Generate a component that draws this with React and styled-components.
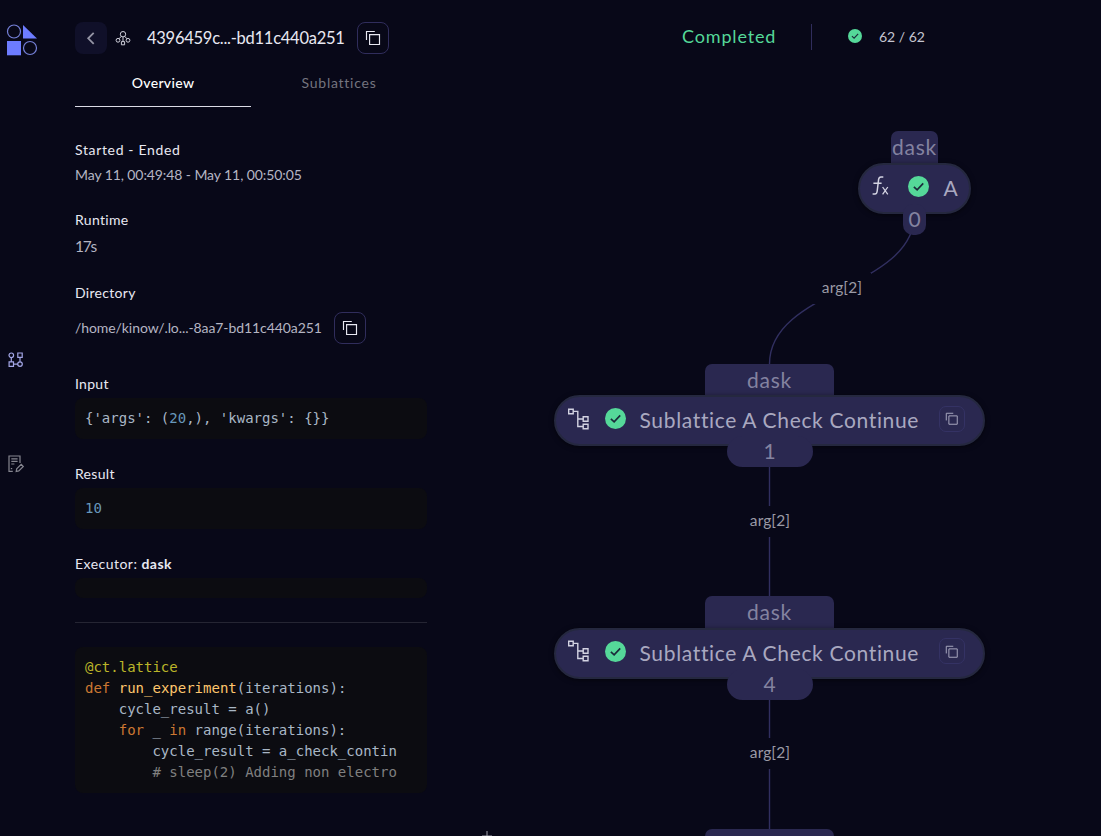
import React from "react";
import styled, { createGlobalStyle } from "styled-components";

const colors = {
  background: "#080818",
  node: "#2a2850",
  nodeBorder: "#25283f",
  edge: "#312f60",
  outline: "#302d5c",
  code: "#0c0c11",
  primary: "#e8e8f2",
  secondary: "#b5b5c3",
  muted: "#74747f",
  brand: "#6d7cff",
  success: "#55d899",
};

const nodes = [
  { id: 1, name: "Sublattice A Check Continue", count: 1, top: 363.7 },
  { id: 4, name: "Sublattice A Check Continue", count: 4, top: 596.2 },
];

const edgeLabels = [
  { left: 813, top: 273 },
  { left: 741, top: 506 },
  { left: 741, top: 738 },
];

function App() {
  return (
    <Page>
      <GlobalStyle />
      <Sidebar>
        <Logo />
        <LatticeIcon />
        <LogsIcon />
      </Sidebar>
      <Panel>
        <Header>
          <BackButton>
            <svg width="32" height="32" fill="none" stroke="#9595a5" strokeWidth="1.8">
              <path d="M18.7 10.8L13.2 16.3L18.7 21.8" />
            </svg>
          </BackButton>
          <TreeIcon />
          <Title>4396459c...-bd11c440a251</Title>
          <CopyButton>
            <CopyIcon />
          </CopyButton>
        </Header>
        <Tabs>
          <Tab $active>Overview</Tab>
          <Tab>Sublattices</Tab>
        </Tabs>
        <Field $gap={5} $after={25}>
          <Label $track={0.65}>Started - Ended</Label>
          <Value $track={-0.09}>May 11, 00:49:48 - May 11, 00:50:05</Value>
        </Field>
        <Field $gap={6} $after={27}>
          <Label>Runtime</Label>
          <Value $size={15.5} $track={-1.3}>
            17s
          </Value>
        </Field>
        <Field $gap={9} $after={30}>
          <Label>Directory</Label>
          <Directory>
            <Value $track={-0.08}>/home/kinow/.lo...-8aa7-bd11c440a251</Value>
            <CopyButton>
              <CopyIcon />
            </CopyButton>
          </Directory>
        </Field>
        <Field $gap={4} $after={25}>
          <Label>Input</Label>
          <Code>
            {"{'args': ("}
            <Num>20</Num>
            {",), 'kwargs': {}}"}
          </Code>
        </Field>
        <Field $gap={4} $after={25}>
          <Label>Result</Label>
          <Code>
            <Num>10</Num>
          </Code>
        </Field>
        <Field $gap={4} $after={24}>
          <Label $track={0.47}>
            Executor: <b>dask</b>
          </Label>
          <Code />
        </Field>
        <Divider />
        <Code>
          <Line>
            <Meta>@ct.lattice</Meta>
          </Line>
          <Line>
            <Keyword>def</Keyword> <Fn>run_experiment</Fn>(iterations):
          </Line>
          <Line $indent={4}>cycle_result = a()</Line>
          <Line $indent={4}>
            <Keyword>for</Keyword> _ <Keyword>in</Keyword> range(iterations):
          </Line>
          <Line $indent={8}>cycle_result = a_check_contin</Line>
          <Line $indent={8}>
            <Comment># sleep(2) Adding non electro</Comment>
          </Line>
        </Code>
      </Panel>
      <Main>
        <Status>
          <Completed>Completed</Completed>
          <Separator />
          <CheckIcon size={14} />
          <Counter>62 / 62</Counter>
        </Status>
      </Main>
      <Graph>
        <Edges width="1101" height="836">
          <path d="M914.5 214C914.5 289 769.5 289 769.5 364" />
          <path d="M769.5 446V597M769.5 679V829" />
        </Edges>
        {edgeLabels.map((label) => (
          <EdgeLabel key={label.top} $left={label.left} $top={label.top}>
            arg[2]
          </EdgeLabel>
        ))}
        <Node $left={858} $top={131.1} $width={113}>
          <Executor $width={47}>dask</Executor>
          <NodeBody $gap={16}>
            <FunctionIcon />
            <CheckIcon size={21} />
            <NodeName>A</NodeName>
          </NodeBody>
          <NodeCount $width={23} $small>
            0
          </NodeCount>
        </Node>
        {nodes.map((node) => (
          <Node key={node.id} $left={554} $top={node.top} $width={431}>
            <Executor $width={129}>dask</Executor>
            <NodeBody $gap={15}>
              <SublatticeIcon />
              <CheckIcon size={21} />
              <NodeName>{node.name}</NodeName>
              <NodeCopy>
                <CopyIcon size={13.5} />
              </NodeCopy>
            </NodeBody>
            <NodeCount $width={86}>{node.count}</NodeCount>
          </Node>
        ))}
        <Node $left={554} $top={829} $width={431}>
          <Executor $width={129} />
        </Node>
        <ZoomIn width="10" height="10" viewBox="0 0 10 10">
          <path d="M5 0V10M0 5H10" />
        </ZoomIn>
      </Graph>
    </Page>
  );
}

export default App;

function Logo() {
  return (
    <svg width="32" height="32" viewBox="0 0 32 32" fill={colors.brand}>
      <circle cx="8" cy="7.5" r="6.5" fill="none" stroke="#7580d8" strokeWidth="1.2" />
      <path d="M17 1L31 14.5H17Z" />
      <path d="M1 17H15V31.3H1Z" />
      <circle cx="24" cy="24" r="6.5" fill="none" stroke="#7580d8" strokeWidth="1.2" />
    </svg>
  );
}

function LatticeIcon() {
  return (
    <NavIcon $top={296} width="16" height="16" stroke="#a3a6e6">
      <circle cx="3.3" cy="3.3" r="2.3" />
      <path d="M9.8 1H14.2V5.4H9.8ZM1.1 9.9H5.5V14.3H1.1Z" />
      <circle cx="12" cy="12.1" r="2.3" />
      <path d="M3.3 5.6V9.9M12 5.4V9.8M5.5 12.1H9.7" />
    </NavIcon>
  );
}

function LogsIcon() {
  return (
    <NavIcon $top={87} width="17" height="18" stroke="#85858f">
      <path d="M4.8 16.3H1V1H12V8" />
      <path d="M3.3 3.8H9.6M3.3 6.4H9.6M3.3 9H6.4" />
      <path d="M2.8 13.6H4.2" />
      <path d="M8.2 16.4L8.7 13.8L13.2 9.4L15.3 11.5L10.8 15.9Z" />
    </NavIcon>
  );
}

function TreeIcon() {
  return (
    <svg width="16" height="16" fill="none" stroke="#cfcfda" strokeWidth="1">
      <circle cx="8" cy="4.2" r="2.7" />
      <circle cx="3" cy="10.3" r="1.9" />
      <circle cx="13" cy="10.3" r="1.9" />
      <path d="M6.4 11.6H9.6V14.8H6.4ZM8 7V11.6M6.2 6.3L4.2 8.7M9.8 6.3L11.8 8.7" />
    </svg>
  );
}

function CopyIcon({ size = 16 }) {
  return (
    <svg width={size} height={size} viewBox="0 0 16 16" fill="none" stroke="currentColor" strokeWidth="1.15">
      <path d="M4.6 4.6H14.5V14.5H4.6Z" />
      <path d="M1.5 10V1.5H9.8" />
    </svg>
  );
}

function CheckIcon({ size }) {
  return (
    <svg width={size} height={size} viewBox="0 0 20 20" fill="none">
      <circle cx="10" cy="10" r="10" fill={colors.success} />
      <path d="M5.6 10.3L8.7 13.2L14.5 7" stroke="#1b2a3a" strokeWidth="1.6" />
    </svg>
  );
}

function FunctionIcon() {
  return (
    <svg width="20" height="22" fill="none" stroke="#d3d3e2" strokeWidth="1.5">
      <path d="M11.3 2H8.9C7.4 2 6.9 2.8 6.6 4.4L5.2 16C5 18 4.4 19 3 19H0.6M1.4 8.2H9.6" />
      <path d="M10.6 12L15.8 19.4M15.8 12L10.6 19.4" strokeWidth="1.3" />
    </svg>
  );
}

function SublatticeIcon() {
  return (
    <svg width="22" height="22" fill="none" stroke="#d3d3e2" strokeWidth="1.4">
      <path d="M0.7 1.2H5.2V5.7H0.7ZM15.2 8.7H20V13.3H15.2ZM15.2 16.2H20V20.8H15.2Z" />
      <path d="M5.2 3.4H9.8V18.5H15.2M9.8 11H15.2" />
    </svg>
  );
}

const GlobalStyle = createGlobalStyle`
  * {
    box-sizing: border-box;
  }
  body {
    margin: 0;
    background: ${colors.background};
    color: ${colors.primary};
    font-family: Lato, "Liberation Sans", sans-serif;
    overflow: hidden;
  }
  button {
    padding: 0;
    background: none;
    color: inherit;
    font: inherit;
  }
  svg {
    display: block;
    flex: none;
  }
`;

const Page = styled.div`
  position: relative;
  display: grid;
  grid-template-columns: 75px 352px 1fr;
  height: 836px;
  overflow: hidden;
`;

const Sidebar = styled.nav`
  display: flex;
  flex-direction: column;
  align-items: flex-start;
  padding: 23.5px 0 0 6px;
`;

const NavIcon = styled.svg`
  fill: none;
  stroke-width: 1.2;
  margin-top: ${(props) => props.$top}px;
  margin-left: 2px;
`;

const Panel = styled.section`
  padding-top: 22px;
`;

const Header = styled.header`
  display: flex;
  align-items: center;
  height: 32px;
  > svg {
    margin: 0 16px 0 8px;
  }
`;

const BackButton = styled.button`
  width: 32px;
  height: 32px;
  border: none;
  border-radius: 8px;
  background: #101029;
`;

const Title = styled.div`
  width: 210px;
  font-size: 16.5px;
  letter-spacing: -0.26px;
  white-space: nowrap;
`;

const CopyButton = styled.button`
  display: flex;
  flex: none;
  align-items: center;
  justify-content: center;
  width: 32px;
  height: 32px;
  border: 1px solid ${colors.outline};
  border-radius: 8px;
`;

const Tabs = styled.div`
  display: grid;
  grid-template-columns: 1fr 1fr;
  height: 53px;
  margin-bottom: 33px;
`;

const Tab = styled.div`
  padding-top: 19px;
  border-bottom: 1px solid ${(props) => (props.$active ? "#dcdce6" : "transparent")};
  color: ${(props) => (props.$active ? "#fff" : colors.muted)};
  font-size: 14px;
  font-weight: ${(props) => (props.$active ? 500 : 400)};
  letter-spacing: ${(props) => (props.$active ? 0.35 : 0.75)}px;
  line-height: 20px;
  text-align: center;
`;

const Field = styled.div`
  display: flex;
  flex-direction: column;
  gap: ${(props) => props.$gap}px;
  margin-bottom: ${(props) => props.$after}px;
`;

const Label = styled.div`
  font-size: 14px;
  letter-spacing: ${(props) => props.$track ?? 0.3}px;
  line-height: 20px;
`;

const Value = styled.div`
  color: ${colors.secondary};
  font-size: ${(props) => props.$size ?? 14}px;
  letter-spacing: ${(props) => props.$track ?? 0}px;
  line-height: 20px;
  white-space: nowrap;
`;

const Directory = styled.div`
  display: flex;
  align-items: center;
  ${Value} {
    width: 259px;
  }
`;

const Code = styled.pre`
  min-height: 20px;
  margin: 0;
  padding: 10px;
  border-radius: 8px;
  background: ${colors.code};
  color: #a9b7c6;
  font-family: "DejaVu Sans Mono", monospace;
  font-size: 14px;
  line-height: 21px;
  overflow: hidden;
`;

const Line = styled.div`
  padding-left: ${(props) => props.$indent ?? 0}ch;
`;

const Num = styled.span`
  color: #6897bb;
`;
const Keyword = styled.span`
  color: #cc7832;
`;
const Meta = styled.span`
  color: #bbb529;
`;
const Fn = styled.span`
  color: #ffc66d;
`;
const Comment = styled.span`
  color: #808080;
`;

const Divider = styled.div`
  height: 1px;
  margin-bottom: 24px;
  background: #252533;
`;

const Main = styled.main`
  padding: 22px 0 0 255px;
`;

const Status = styled.div`
  display: flex;
  align-items: center;
  height: 29px;
  > svg {
    margin-bottom: 1px;
  }
`;

const Completed = styled.div`
  width: 129px;
  padding-bottom: 1px;
  color: ${colors.success};
  font-size: 18px;
  letter-spacing: 0.85px;
`;

const Separator = styled.div`
  width: 1px;
  height: 26px;
  margin-right: 36px;
  background: ${colors.outline};
`;

const Counter = styled.div`
  margin-left: 17px;
  color: #c4c4d0;
  font-size: 14px;
`;

const Graph = styled.div`
  position: absolute;
  inset: 0;
  pointer-events: none;
`;

const Edges = styled.svg`
  position: absolute;
  fill: none;
  stroke: ${colors.edge};
  stroke-width: 1.4;
`;

const EdgeLabel = styled.div`
  position: absolute;
  left: ${(props) => props.$left}px;
  top: ${(props) => props.$top}px;
  width: 58px;
  height: 31px;
  background: ${colors.background};
  color: #9a9aa5;
  font-size: 15.5px;
  letter-spacing: 0.1px;
  line-height: 29px;
  text-align: center;
`;

const Node = styled.div`
  position: absolute;
  left: ${(props) => props.$left}px;
  top: ${(props) => props.$top}px;
  width: ${(props) => props.$width}px;
  display: flex;
  flex-direction: column;
  align-items: center;
`;

const Executor = styled.div`
  display: flex;
  justify-content: center;
  width: ${(props) => props.$width}px;
  height: 31.6px;
  border-radius: 7px 7px 0 0;
  background: ${colors.node};
  color: #8483a0;
  font-size: 21px;
  letter-spacing: 0.75px;
  line-height: 31px;
`;

const NodeBody = styled.div`
  display: flex;
  align-items: center;
  gap: ${(props) => props.$gap}px;
  width: 100%;
  height: 51px;
  padding: 0 12px 4px;
  border: 2px solid ${colors.nodeBorder};
  border-radius: 26px;
  background: ${colors.node};
  box-shadow: 0 1px 5px rgba(0, 0, 0, 0.5);
`;

const NodeName = styled.div`
  margin-left: -1.5px;
  padding-top: 2px;
  color: #a9a8c0;
  font-size: 21px;
  letter-spacing: 0.66px;
  white-space: nowrap;
`;

const NodeCopy = styled.div`
  display: flex;
  align-items: center;
  justify-content: center;
  width: 26px;
  height: 26px;
  margin-left: auto;
  margin-right: 6px;
  border: 1px solid #343264;
  border-radius: 7px;
  color: #aaa9c0;
`;

const NodeCount = styled.div`
  z-index: 1;
  width: ${(props) => props.$width}px;
  height: 31px;
  margin-top: -10px;
  border-radius: ${(props) => (props.$small ? 10 : 16)}px;
  background: ${colors.node};
  color: #8483a0;
  font-size: 21px;
  line-height: 29px;
  text-align: center;
`;

const ZoomIn = styled.svg`
  position: absolute;
  left: 482px;
  top: 831px;
  stroke: #a0a0ac;
`;
